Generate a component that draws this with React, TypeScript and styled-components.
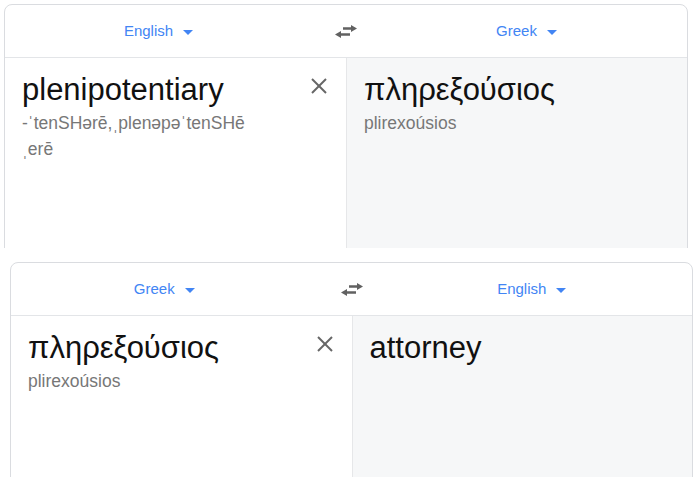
import React from "react";
import styled, { createGlobalStyle } from "styled-components";

const GlobalStyle = createGlobalStyle`
  html, body {
    margin: 0;
    padding: 0;
    background: #ffffff;
    font-family: "Liberation Sans", Arial, Helvetica, sans-serif;
  }
`;

const Page = styled.div`
  width: 700px;
  height: 477px;
  overflow: hidden;
`;

const Clip = styled.div`
  box-sizing: border-box;
  height: 248px;
  padding: 4px 0 0 4px;
  overflow: hidden;
`;

const Card = styled.div<{ $width: number; $offset?: number }>`
  box-sizing: border-box;
  width: ${(p) => p.$width}px;
  height: 320px;
  margin-left: ${(p) => p.$offset ?? 0}px;
  border: 1px solid #dadce0;
  border-radius: 8px;
  background: #ffffff;
  overflow: hidden;
`;

const SecondCard = styled(Card)`
  margin-top: 14px;
`;

const Header = styled.div`
  display: grid;
  grid-template-columns: 1fr 40px 1fr;
  align-items: center;
  height: 52px;
  border-bottom: 1px solid #e3e5e8;
`;

const LangSlot = styled.div<{ $side: "left" | "right" }>`
  display: flex;
  justify-content: center;
  padding-right: ${(p) => (p.$side === "left" ? 14 : 0)}px;
  padding-left: ${(p) => (p.$side === "right" ? 0 : 0)}px;
`;

const LangButton = styled.div`
  display: flex;
  align-items: center;
  gap: 10px;
  color: #4285f4;
  font-size: 15px;
  line-height: 20px;
`;

const Caret = styled.span`
  width: 0;
  height: 0;
  margin-top: 2px;
  border-left: 5px solid transparent;
  border-right: 5px solid transparent;
  border-top: 5px solid #4285f4;
`;

const SwapButton = styled.div`
  display: flex;
  justify-content: center;
  align-items: center;
  color: #616161;
`;

const Panes = styled.div`
  display: grid;
  grid-template-columns: 1fr 1fr;
  height: 100%;
`;

const Pane = styled.div<{ $target?: boolean }>`
  display: flex;
  align-items: flex-start;
  padding: 14px 18px 0 17px;
  background: ${(p) => (p.$target ? "#f6f7f8" : "#ffffff")};
  border-left: ${(p) => (p.$target ? "1px solid #e6e7e9" : "none")};
`;

const TextBlock = styled.div`
  flex: 1;
`;

const MainText = styled.div`
  color: #111111;
  font-size: 31px;
  line-height: 36px;
`;

const SubText = styled.div`
  margin-top: 2px;
  color: #777777;
  font-size: 17.5px;
  line-height: 26px;
`;

const ClearButton = styled.div`
  display: flex;
  margin-top: 5px;
  color: #666666;
`;

const SwapIcon = () => (
  <svg width="22" height="13" viewBox="0 0 22 13" fill="currentColor">
    <rect x="8" y="2.25" width="9" height="2.5" />
    <polygon points="16,0 22,3.5 16,7" />
    <rect x="5" y="8.25" width="10" height="2.5" />
    <polygon points="6,6 0,9.5 6,13" />
  </svg>
);

const ClearIcon = () => (
  <svg width="18" height="18" viewBox="0 0 18 18" stroke="currentColor" strokeWidth="2" fill="none">
    <line x1="2" y1="2" x2="16" y2="16" />
    <line x1="16" y1="2" x2="2" y2="16" />
  </svg>
);

interface ITranslation {
  from: string;
  to: string;
  source: string;
  sourceSub: React.ReactNode;
  target: string;
  targetSub?: string;
}

const TranslateCard = ({ t }: { t: ITranslation }) => (
  <>
    <Header>
      <LangSlot $side="left">
        <LangButton>
          {t.from}
          <Caret />
        </LangButton>
      </LangSlot>
      <SwapButton>
        <SwapIcon />
      </SwapButton>
      <LangSlot $side="right">
        <LangButton>
          {t.to}
          <Caret />
        </LangButton>
      </LangSlot>
    </Header>
    <Panes>
      <Pane>
        <TextBlock>
          <MainText>{t.source}</MainText>
          <SubText>{t.sourceSub}</SubText>
        </TextBlock>
        <ClearButton>
          <ClearIcon />
        </ClearButton>
      </Pane>
      <Pane $target>
        <TextBlock>
          <MainText>{t.target}</MainText>
          {t.targetSub && <SubText>{t.targetSub}</SubText>}
        </TextBlock>
      </Pane>
    </Panes>
  </>
);

const first: ITranslation = {
  from: "English",
  to: "Greek",
  source: "plenipotentiary",
  sourceSub: (
    <>
      -ˈtenSHərē,ˌplenəpəˈtenSHē
      <br />
      ˌerē
    </>
  ),
  target: "πληρεξούσιος",
  targetSub: "plirexoúsios",
};

const second: ITranslation = {
  from: "Greek",
  to: "English",
  source: "πληρεξούσιος",
  sourceSub: "plirexoúsios",
  target: "attorney",
};

export default function App() {
  return (
    <Page>
      <GlobalStyle />
      <Clip>
        <Card $width={684}>
          <TranslateCard t={first} />
        </Card>
      </Clip>
      <SecondCard $width={683} $offset={10}>
        <TranslateCard t={second} />
      </SecondCard>
    </Page>
  );
}
